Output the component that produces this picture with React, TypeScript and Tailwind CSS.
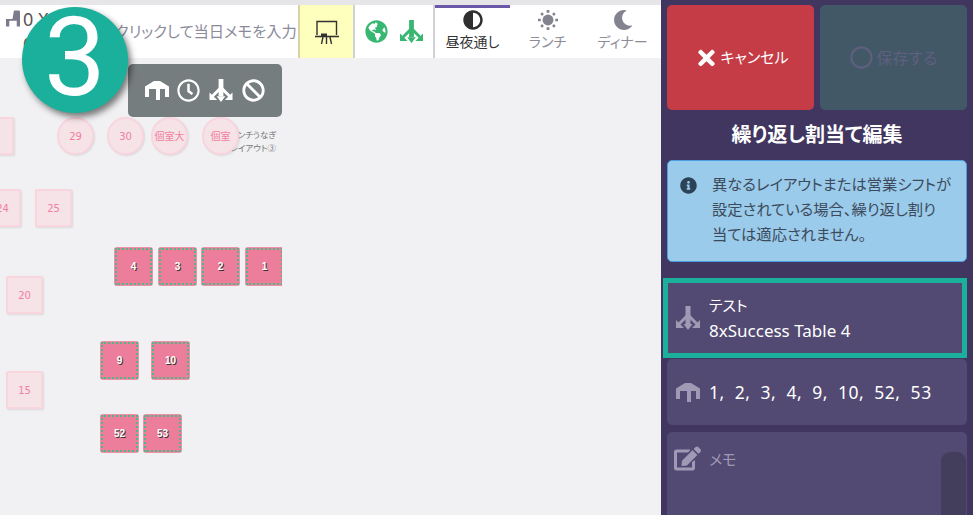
import { FaAdjust, FaBan, FaEdit, FaGlobeAmericas, FaInfoCircle, FaMoon, FaRegCircle, FaRegClock, FaTimes } from "react-icons/fa";

const SANS = "font-['Noto_Sans','Noto_Sans_CJK_JP',sans-serif] [font-feature-settings:'palt']";

function TableIcon({ className }: { className?: string }) {
  return (
    <svg viewBox="0 0 24 19" className={className} fill="currentColor">
      <path d="M9 0h6l9 5.500V16h-4V8h-5v11h-4V8H4v8H0V5.500Z" />
    </svg>
  );
}

function LayoutIcon({ className }: { className?: string }) {
  return (
    <svg viewBox="0 0 26 24" className={className} fill="currentColor" stroke="currentColor">
      <path d="M13 0v18" strokeWidth="5" />
      <path d="M13 9 4 18M13 9l9 9" strokeWidth="3" fill="none" />
      <path d="M1 14v8h8ZM25 14v8h-8ZM8.500 18h9L13 24Z" stroke="none" />
    </svg>
  );
}

function BoardIcon({ className }: { className?: string }) {
  return (
    <svg viewBox="0 0 24 24" className={className} fill="none" stroke="currentColor" strokeWidth="1.4">
      <path d="M2 15V1.500h19.500V15" />
      <path d="M0 16.500h24" strokeWidth="1.600" />
      <path d="M6 15h6" strokeWidth="3" />
      <path d="M8 17l-1.500 7M11.500 17v7M15 17l1.500 7" />
    </svg>
  );
}

function ChairIcon({ className }: { className?: string }) {
  return (
    <svg viewBox="0 0 15 17" className={className} fill="currentColor">
      <path d="M8.500 0h5a1.500 1.500 0 0 1 1.500 1.500V17h-3.500v-6h-8v6H0V9h7Z" />
    </svg>
  );
}

function SunIcon({ className }: { className?: string }) {
  return (
    <svg viewBox="0 0 22 22" className={className} fill="currentColor">
      <circle cx="11" cy="11" r="6" />
      <path d="M9.500 0h3v3h-3zM9.500 19h3v3h-3zM0 9.500h3v3H0zM19 9.500h3v3h-3zM2.500 4.500l2-2 2 2-2 2zM15.500 4.500l2-2 2 2-2 2zM2.500 17.500l2-2 2 2-2 2zM15.500 17.500l2-2 2 2-2 2z" />
    </svg>
  );
}

function ShiftTab({ icon, label, active }: { icon: React.ReactNode; label: string; active?: boolean }) {
  return (
    <div className={`flex w-[75px] flex-col items-center border-t-[3px] pt-[2px] ${active ? "border-[#6a58a8]" : "border-transparent text-[#83838f]"}`}>
      <div className="flex h-[20px] items-center text-[20px]">{icon}</div>
      <span className={`mt-[3px] text-[14px] leading-[18px] ${active ? "text-[#333]" : "text-[#8d8d98]"}`}>{label}</span>
    </div>
  );
}

function Seat({ label, x, y, round }: { label: string; x: number; y: number; round?: boolean }) {
  return (
    <div
      className={`absolute flex h-[38px] w-[37px] items-center justify-center border-2 border-[#f9d5de] bg-[#f5e3e8] font-['DejaVu_Sans','Noto_Sans_CJK_JP',sans-serif] text-[10px] whitespace-nowrap text-[#f27f9f] shadow-[1px_1px_2px_rgba(0,0,0,0.1)] ${round ? "rounded-full" : "rounded-[2px]"}`}
      style={{ left: x, top: y }}
    >
      {label}
    </div>
  );
}

function Picked({ label, x, y }: { label: string; x: number; y: number }) {
  return (
    <div className="absolute h-[39px] w-[39px] rounded-[3px] bg-[#f08fa9] p-[1px]" style={{ left: x, top: y }}>
      <div className="flex h-full w-full items-center justify-center border-2 border-dotted border-[#4fb885] bg-[#ec7d9b] font-['Liberation_Sans',sans-serif] text-[10px] font-bold text-white [text-shadow:1px_1px_0_#333]">
        {label}
      </div>
    </div>
  );
}

export default function App() {
  const seats: [string, number, number, boolean?][] = [
    ["30", 107, 117, true],
    ["29", 57, 117, true],
    ["25", 35, 189],
    ["24", -16, 189],
    ["20", 6, 276],
    ["15", 6, 371],
    ["5", -23, 117],
  ];
  const picked: [string, number, number][] = [
    ["4", 114, 247],
    ["3", 158, 247],
    ["2", 201, 247],
    ["9", 100, 341],
    ["10", 151, 341],
    ["52", 100, 414],
    ["53", 143, 414],
  ];

  return (
    <div className={`flex h-[515px] w-[973px] overflow-hidden bg-[#f1f1f3] ${SANS}`}>
      <main className="flex w-[661px] flex-col">
        <div className="h-[5px] bg-[#e6e6e9]" />
        <header className="relative z-10 flex h-[53px] items-stretch bg-white">
          <div className="flex w-[298px] items-center overflow-hidden pl-[6px]">
            <ChairIcon className="mb-[26px] h-[17px] w-[14px] shrink-0 text-[#7b7b8c]" />
            <div className="ml-[3px] w-[92px] shrink-0 text-[18px] leading-[25px] text-[#555]">
              <div>0 X</div>
              <div>0</div>
            </div>
            <span className="whitespace-nowrap text-[15.300px] text-[#8b8b9a]">クリックして当日メモを入力</span>
          </div>
          <div className="flex w-[57px] items-center justify-center border-x-2 border-l-[#d8d3a0] border-r-[#d0d0d6] bg-[#ffffbd]">
            <BoardIcon className="h-[24px] w-[24px] text-[#333]" />
          </div>
          <div className="flex w-[80px] items-center gap-[11px] border-r-2 border-[#d0d0d6] pl-[10px]">
            <FaGlobeAmericas className="h-[23px] w-[23px] text-[#37b772]" />
            <LayoutIcon className="h-[23px] w-[25px] text-[#37b772]" />
          </div>
          <ShiftTab active label="昼夜通し" icon={<FaAdjust className="text-[#2f2f2f]" />} />
          <ShiftTab label="ランチ" icon={<SunIcon className="h-[20px] w-[20px]" />} />
          <ShiftTab label="ディナー" icon={<FaMoon />} />
        </header>
        <section className="relative flex-1">
          {seats.map(([label, x, y, round]) => (
            <Seat key={label} label={label} x={x} y={y - 58} round={round} />
          ))}
          <Seat label="個室大" x={151} y={59} round />
          <div className="absolute top-[70px] left-[205px] w-[71px] text-right text-[8.500px] leading-[13px] text-[#777]">
            ランチうなぎ
            <br />
            レイアウト③
          </div>
          <Seat label="個室" x={202} y={59} round />
          {picked.map(([label, x, y]) => (
            <Picked key={label} label={label} x={x} y={y - 58} />
          ))}
          <div className="absolute top-[189px] left-[245px] h-[39px] w-[37px] overflow-hidden">
            <Picked label="1" x={0} y={0} />
          </div>
          <div className="absolute top-[6px] left-[128px] flex h-[53px] w-[154px] items-center justify-center gap-[8px] rounded-[5px] bg-[#767d7f] text-white">
            <TableIcon className="h-[19px] w-[24px]" />
            <FaRegClock className="h-[23px] w-[23px]" />
            <LayoutIcon className="h-[23px] w-[26px]" />
            <FaBan className="h-[23px] w-[23px]" />
          </div>
        </section>
      </main>

      <aside className="relative flex w-[312px] flex-col bg-[#41365f] px-[6px] pt-[5px]">
        <div className="flex shrink-0 gap-[6px]">
          <button className="flex h-[105px] w-[147px] items-center justify-center gap-[6px] rounded-[5px] bg-[#c63c46] pl-[5px] text-[15px] text-white">
            <FaTimes className="h-[24px] w-[17px]" />
            キャンセル
          </button>
          <button className="flex h-[105px] w-[147px] items-center justify-center gap-[4px] rounded-[5px] bg-[#425866] text-[16px] text-[#5f5f80]">
            <FaRegCircle className="h-[23px] w-[23px]" />
            保存する
          </button>
        </div>
        <h2 className="mt-[11px] shrink-0 text-center text-[20px] leading-[28px] font-bold text-white">繰り返し割当て編集</h2>
        <div className="mt-[11px] flex h-[102px] w-[300px] shrink-0 gap-[15px] rounded-[5px] border border-[#4a9ee0] bg-[#9acbea] pt-[11px] pl-[12px] text-[#3d4a5c]">
          <FaInfoCircle className="mt-[5px] h-[17px] w-[17px] shrink-0 text-[#2c4257]" />
          <p className="text-[15.300px] leading-[25px] whitespace-pre">{"異なるレイアウトまたは営業シフトが\n設定されている場合、繰り返し割り\n当ては適応されません。"}</p>
        </div>
        <div className="mt-[16px] -ml-[4px] flex h-[80px] w-[304px] shrink-0 items-center gap-[8px] border-[5px] border-[#1ab09c] bg-[#524a72] pl-[7px] text-white">
          <LayoutIcon className="h-[24px] w-[26px] shrink-0 text-[#a09ab5]" />
          <div className="text-[17px] leading-[25px]">
            <div className="text-[15px]">テスト</div>
            <div>8xSuccess Table 4</div>
          </div>
        </div>
        <div className="mt-[1px] flex h-[66px] w-[300px] shrink-0 items-center gap-[9px] rounded-[5px] bg-[#524a72] pl-[9px] text-[17.500px] text-white">
          <TableIcon className="h-[21px] w-[24px] shrink-0 text-[#a09ab5]" />
          <span className="tracking-[0.5px] whitespace-pre">1,  2,  3,  4,  9,  10,  52,  53</span>
        </div>
        <div className="mt-[7px] flex h-[90px] w-[300px] shrink-0 items-start gap-[8px] rounded-[5px] bg-[#524a72] pt-[14px] pl-[7px] text-[15px] text-[#a09ab5]">
          <FaEdit className="h-[25px] w-[27px] shrink-0" />
          <span className="mt-[2px]">メモ</span>
        </div>
        <div className="absolute top-[452px] left-[280px] h-[70px] w-[25px] rounded-[9px] bg-[#433e5c]" />
      </aside>

      <div className="absolute top-[7px] left-[22px] z-20 flex h-[106px] w-[106px] items-center justify-center rounded-full bg-[#1ab09c] pb-[5px] font-['Roboto',sans-serif] text-[110px] leading-none text-white shadow-[3px_4px_6px_rgba(0,0,0,0.5)]">
        3
      </div>
    </div>
  );
}
